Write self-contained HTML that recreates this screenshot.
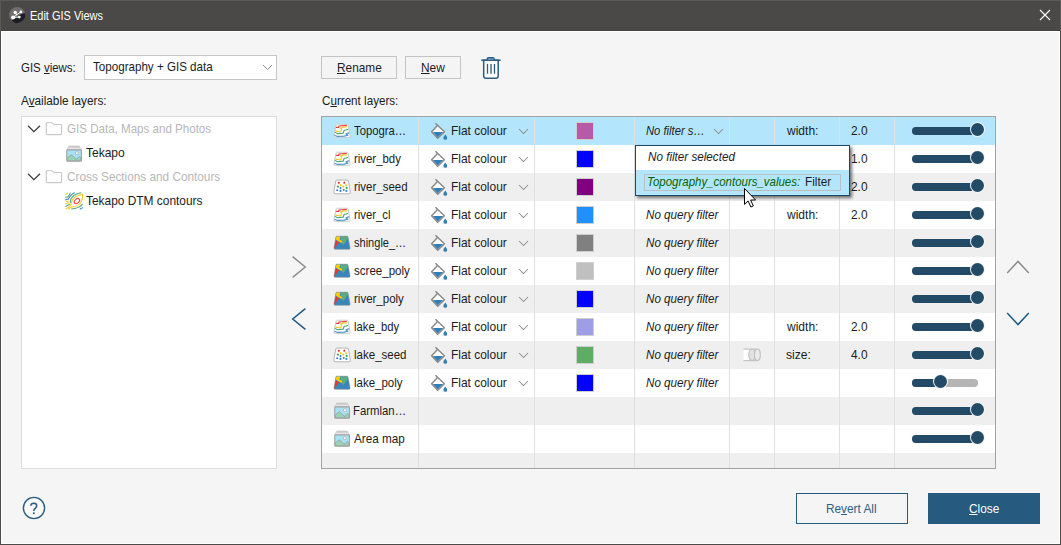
<!DOCTYPE html>
<html lang="en">
<head>
<meta charset="utf-8">
<title>Edit GIS Views</title>
<style>
html,body{margin:0;padding:0;background:#f5f5f5;}
body{width:1061px;height:545px;overflow:hidden;position:relative;font-family:"Liberation Sans",sans-serif;font-size:13px;color:#1c1c1c;}
#win{position:absolute;left:0;top:0;width:1059px;height:513px;border:1px solid #4d4b49;border-top:31px solid #4b4947;background:#f5f5f5;box-sizing:content-box;box-shadow:inset 0 0 0 1px #fff;}
#titlebar{position:absolute;left:0;top:0;width:1061px;height:31px;background:#4b4947;box-shadow:inset 0 1px 0 #5b5957, inset -1px 0 0 #5b5957, inset 1px 0 0 #5b5957, inset 0 -1px 0 #454341;}
.ic{position:absolute;overflow:visible;}
.t{position:absolute;white-space:nowrap;line-height:15px;transform-origin:0 50%;}
.t u{text-decoration:underline;text-underline-offset:1px;text-decoration-thickness:1px;}
#combo{position:absolute;left:84px;top:55px;width:191px;height:23px;border:1px solid #c6c6c6;background:#fff;}
#tree{position:absolute;left:21px;top:116px;width:254px;height:351px;border:1px solid #dcdcdc;background:#fff;}
.btn{position:absolute;border:1px solid #c4c4c4;background:#f4f4f4;}
#table{position:absolute;left:321px;top:116px;width:673px;height:351px;border:1px solid #a3a3a3;background:#fff;overflow:hidden;}
.row{position:absolute;left:0;width:673px;background:#fff;}
.row.alt{background:#efefef;}
.row.sel{background:#b3e5fc;}
.vsep{position:absolute;top:0;width:1px;height:351px;background:#e0e0e0;}
.sw{position:absolute;width:16px;height:16px;border:1px solid #cecece;}
.trk{position:absolute;height:7.4px;border-radius:3.7px;background:#234b67;}
.knob{position:absolute;width:13.4px;height:13.4px;border-radius:50%;background:#234b67;border:1px solid rgba(255,255,255,.95);}
#popup{position:absolute;left:635px;top:145px;width:213px;height:49px;border:1px solid #1d4866;background:#fff;box-shadow:2px 2px 3px rgba(0,0,0,.55);}
#pophl{position:absolute;left:0;top:24px;width:213px;height:25px;background:#b3e5fc;}
#popfocus{position:absolute;left:8px;top:28px;width:195px;height:15px;border:1px solid #b9c0c4;}
#revert{position:absolute;left:796px;top:493px;width:110px;height:29px;border:1px solid #265a7f;}
#close{position:absolute;left:928px;top:493px;width:112px;height:31px;background:#265a7f;}
</style>
</head>
<body>
<div id="win"></div>
<div id="titlebar">
<svg class="ic" style="left:8px;top:6px" width="18" height="18" viewBox="0 0 18 18">
<circle cx="9.2" cy="9" r="8" fill="#6f6f6f"/>
<path d="M3.4 14.5 C6.5 13.5 8.3 11.8 10 10.1 C12 8.3 14.5 7.6 17 7.2 A8 8 0 0 1 3.4 14.5Z" fill="#1d1e23"/>
<path d="M7.2 6.5 L9 9 M5.1 11.4 L11.3 11.1 M5.1 11.4 L12.9 5.9" stroke="#fff" stroke-width=".9" fill="none"/>
<circle cx="7.2" cy="6.5" r="1.7" fill="#fff"/><circle cx="12.9" cy="5.9" r="1.3" fill="#fff"/>
<circle cx="5.1" cy="11.4" r="1.95" fill="#fff"/><circle cx="11.3" cy="11.1" r="1.4" fill="#fff"/>
</svg>
<span class="t" style="left:30.0px;top:9px;font-size:12px;color:#fff;transform:scaleX(0.9147);">Edit GIS Views</span>
<svg class="ic" style="left:1038px;top:8px" width="14" height="14" viewBox="0 0 14 14"><path d="M2 2 L12 12 M12 2 L2 12" stroke="#fff" stroke-width="1.1"/></svg>
</div>
<span class="t" style="left:21.2px;top:60px;transform:scaleX(0.8811);">GIS <u>v</u>iews:</span>
<div id="combo">
</div>
<span class="t" style="left:93.4px;top:59px;transform:scaleX(0.8930);">Topography + GIS data</span>
<svg class="ic" style="left:261.8px;top:64.0px" width="11" height="6.6" viewBox="-1 -1 11 6.6"><path d="M0 0 L4.5 4.6 L9 0" fill="none" stroke="#8f8f8f" stroke-width="1.0"/></svg>
<span class="t" style="left:21.2px;top:93px;transform:scaleX(0.9061);">A<u>v</u>ailable layers:</span>
<div id="tree"></div>
<svg class="ic" style="left:26px;top:124px" width="16" height="10" viewBox="0 0 16 10"><path d="M2 1.8 L7.9 7.7 L14 1.8" fill="none" stroke="#3a3a3a" stroke-width="1.25"/></svg>
<svg class="ic" style="left:45px;top:121px" width="18" height="15" viewBox="0 0 18 15"><path d="M2.3 1.5 H6.4 Q6.9 1.5 7.2 1.9 L8.3 3.2 Q8.6 3.5 9.1 3.5 H15.6 Q16.6 3.5 16.6 4.5 V12.6 Q16.6 13.6 15.6 13.6 H2.3 Q1.3 13.6 1.3 12.6 V2.5 Q1.3 1.5 2.3 1.5Z" fill="#fff" stroke="#c9c9c9" stroke-width="1.15"/></svg>
<span class="t" style="left:66.5px;top:121px;color:#b7b7b7;transform:scaleX(0.8900);">GIS Data, Maps and Photos</span>
<svg class="ic" style="left:65px;top:144.5px" width="18" height="18" viewBox="0 0 18 18">
<path d="M3.3 2.3 L3.8 1 H14.4 L14.9 2.3Z" fill="#cfcfcf" stroke="#c4c4c4" stroke-width=".7"/>
<path d="M2.2 4.4 L2.7 2.7 H15.6 L16.1 4.4Z" fill="#efefef" stroke="#c8c8c8" stroke-width=".7"/>
<rect x="1.75" y="4.85" width="14.7" height="11.4" rx=".7" fill="#a6e1f5" stroke="#a3a3a3" stroke-width="1.1"/>
<path d="M2.3 12.8 L6.5 9.8 L12.6 15.7 H2.3Z" fill="#97d3b5" stroke="#a3a3a3" stroke-width=".9" stroke-linejoin="round"/>
<path d="M11.3 14.2 L14.5 11.5 L15.9 12.8 V15.7 H12.9Z" fill="#97d3b5" stroke="#a3a3a3" stroke-width=".9" stroke-linejoin="round"/>
<circle cx="11.9" cy="8.1" r="1.5" fill="#fff" stroke="#b0b0b0" stroke-width=".8"/>
</svg>
<span class="t" style="left:86.1px;top:145px;transform:scaleX(0.9235);">Tekapo</span>
<svg class="ic" style="left:26px;top:172px" width="16" height="10" viewBox="0 0 16 10"><path d="M2 1.8 L7.9 7.7 L14 1.8" fill="none" stroke="#3a3a3a" stroke-width="1.25"/></svg>
<svg class="ic" style="left:45px;top:169px" width="18" height="15" viewBox="0 0 18 15"><path d="M2.3 1.5 H6.4 Q6.9 1.5 7.2 1.9 L8.3 3.2 Q8.6 3.5 9.1 3.5 H15.6 Q16.6 3.5 16.6 4.5 V12.6 Q16.6 13.6 15.6 13.6 H2.3 Q1.3 13.6 1.3 12.6 V2.5 Q1.3 1.5 2.3 1.5Z" fill="#fff" stroke="#c9c9c9" stroke-width="1.15"/></svg>
<span class="t" style="left:66.5px;top:169px;color:#b7b7b7;transform:scaleX(0.9063);">Cross Sections and Contours</span>
<svg class="ic" style="left:65px;top:192px" width="19" height="19" viewBox="0 0 19 19">
<g fill="none" stroke-width="1.1" stroke-linecap="round">
<ellipse cx="11.9" cy="9.1" rx="3.1" ry="2" transform="rotate(-42 11.9 9.1)" stroke="#e94b4f"/>
<path d="M1.2 16.7 L4.6 14.6 Q5.6 13.6 6.3 10.6 Q7 7.3 10.6 4.8 Q13.8 2.9 17.6 2.2" stroke="#f9ca2a"/>
<path d="M17.6 2.2 Q17.9 6.5 16 10.3 Q13.9 13.8 10.4 14.5 Q7.6 14.8 6 15.3 L3.6 17" stroke="#f9ca2a"/>
<path d="M5.2 10.4 Q5.2 6.5 8.9 3.5 Q11.9 1.3 16 .8" stroke="#58a77d"/>
<path d="M6.7 17 Q9 16.3 11.7 16 Q15 15.2 17.4 12.4" stroke="#58a77d"/>
<path d="M.8 5.3 L2.8 4.9 Q4.2 3.2 5.3 1.2" stroke="#58a77d"/>
<path d="M.9 7.4 L3.2 7.3 Q4 6 5 4.4 Q6.8 2.2 9.3 .8" stroke="#4088c7"/>
<path d="M1 2.3 L2.5 .9" stroke="#f9ca2a"/>
<path d="M.8 8.7 L3.3 10.2 M.8 11.6 L3 11.3" stroke="#f9ca2a"/>
<path d="M.8 14.4 L4.4 12.3" stroke="#58a77d"/>
<path d="M15.2 16.9 L17.4 15.8" stroke="#4088c7"/>
</g>
</svg>
<span class="t" style="left:86.1px;top:193px;transform:scaleX(0.9165);">Tekapo DTM contours</span>
<div class="btn" style="left:321px;top:56px;width:74px;height:21px"></div>
<span class="t" style="left:336.69px;top:60px;transform:scaleX(0.9101);"><u>R</u>ename</span>
<div class="btn" style="left:405px;top:56px;width:54px;height:21px"></div>
<span class="t" style="left:420.58px;top:60px;transform:scaleX(0.9173);"><u>N</u>ew</span>
<svg class="ic" style="left:480px;top:55px" width="22" height="25" viewBox="0 0 22 25">
<path d="M3.7 5.2 H18.2 V21 Q18.2 23.3 15.9 23.3 H6 Q3.7 23.3 3.7 21Z" fill="#fff" stroke="#2a5d82" stroke-width="1.5"/>
<path d="M1.2 5.2 H20.7" stroke="#2a5d82" stroke-width="1.5"/>
<path d="M7.3 5 V3.8 Q7.3 2.6 8.5 2.6 H12.9 Q14.1 2.6 14.1 3.8 V5" fill="#6d93ad" stroke="#2a5d82" stroke-width="1.3"/>
<path d="M7.5 8.9 V18.8 M14.5 8.9 V18.8" stroke="#2a5d82" stroke-width="1.3"/>
<path d="M11 8.9 V18.8" stroke="#6d93ad" stroke-width="2"/>
</svg>
<span class="t" style="left:321.6px;top:93px;transform:scaleX(0.8956);">C<u>u</u>rrent layers:</span>
<svg class="ic" style="left:290px;top:254px" width="18" height="26" viewBox="0 0 18 26"><path d="M2.6 2.6 L15.3 13 L2.6 23.4" fill="none" stroke="#8b8b8b" stroke-width="1.4"/></svg>
<svg class="ic" style="left:290px;top:306px" width="18" height="26" viewBox="0 0 18 26"><path d="M15.4 2.6 L2.7 13 L15.4 23.4" fill="none" stroke="#1f5a85" stroke-width="1.5"/></svg>
<svg class="ic" style="left:1005px;top:259px" width="26" height="16" viewBox="0 0 26 16"><path d="M2.2 14 L13 2.4 L23.8 14" fill="none" stroke="#8b8b8b" stroke-width="1.4"/></svg>
<svg class="ic" style="left:1005px;top:311px" width="26" height="16" viewBox="0 0 26 16"><path d="M2.2 2 L13 13.6 L23.8 2" fill="none" stroke="#1f5a85" stroke-width="1.5"/></svg>
<div id="table">
<div class="row alt sel" style="top:0px;height:28px"></div>
<div class="row" style="top:28px;height:28px"></div>
<div class="row alt" style="top:56px;height:28px"></div>
<div class="row" style="top:84px;height:28px"></div>
<div class="row alt" style="top:112px;height:28px"></div>
<div class="row" style="top:140px;height:28px"></div>
<div class="row alt" style="top:168px;height:28px"></div>
<div class="row" style="top:196px;height:28px"></div>
<div class="row alt" style="top:224px;height:28px"></div>
<div class="row" style="top:252px;height:28px"></div>
<div class="row alt" style="top:280px;height:28px"></div>
<div class="row" style="top:308px;height:28px"></div>
<div class="row alt" style="top:336px;height:15px"></div>
<div class="vsep" style="left:96px"></div>
<div class="vsep" style="left:212px"></div>
<div class="vsep" style="left:312px"></div>
<div class="vsep" style="left:407px"></div>
<div class="vsep" style="left:452px"></div>
<div class="vsep" style="left:517px"></div>
<div class="vsep" style="left:572px"></div>
</div>
<svg class="ic" style="left:333px;top:123px" width="19" height="16" viewBox="0 0 19 16">
<path d="M4 1.2 H14.2 Q15 1.2 15.2 2 L17.1 13.1 Q17.3 14.6 15.9 14.6 H2.2 Q.8 14.6 1 13.1 L3 2 Q3.2 1.2 4 1.2Z" fill="#fff" stroke="#cdcdcd" stroke-width="1"/>
<path d="M3.4 4.4 H5.8 V3 L13.4 2.4" fill="none" stroke="#e8403c" stroke-width="1.1" stroke-linecap="round" stroke-linejoin="round"/>
<path d="M2.6 7.6 L4 8.5 L8 8.2 L8.7 5.8 L7.5 5.1 L9.4 4.4 L14 3.7" fill="none" stroke="#f7c61c" stroke-width="1.1" stroke-linecap="round" stroke-linejoin="round"/>
<path d="M2.4 9.4 L4.2 10.6 L10.3 10.1 L11 7.5 L14.8 6.5" fill="none" stroke="#4fa374" stroke-width="1.1" stroke-linecap="round" stroke-linejoin="round"/>
<path d="M1.9 12.4 L4.6 13.4 L11.2 13.1 L14.9 12.3 L12.9 10.8 L15.8 9.9" fill="none" stroke="#4a93cc" stroke-width="1.1" stroke-linecap="round" stroke-linejoin="round"/>
</svg>
<span class="t" style="left:354.0px;top:123px;transform:scaleX(0.8698);">Topogra…</span>
<svg class="ic" style="left:430px;top:121px" width="18" height="19" viewBox="0 0 18 19">
<path d="M7.4 4.4 L1.7 10.7 L7.7 17 L14.3 10.7 Z" fill="#fff"/>
<path d="M2.8 11 H13.2 L7.7 16.4Z" fill="#2f7fba"/>
<path d="M5.4 2.2 L14.4 10.7 L7.7 17.3 L1.6 10.7 L7.5 4.4" fill="none" stroke="#8a8a8a" stroke-width="1.5" stroke-linejoin="round"/>
<path d="M15.3 13.5 Q17.2 15.9 17.2 16.9 A1.9 1.9 0 0 1 13.4 16.9 Q13.4 15.9 15.3 13.5Z" fill="#2f7fba"/>
</svg>
<span class="t" style="left:450.58px;top:123px;transform:scaleX(0.9195);">Flat colour</span>
<svg class="ic" style="left:517.8px;top:128.4px" width="11" height="6.5" viewBox="-1 -1 11 6.5"><path d="M0 0 L4.5 4.5 L9 0" fill="none" stroke="#8e8e8e" stroke-width="1.05"/></svg>
<div class="sw" style="left:576px;top:122px;background:#b55ba8"></div>
<span class="t" style="left:646.1px;top:123px;font-style:italic;transform:scaleX(0.8649);">No filter s…</span>
<svg class="ic" style="left:713.2px;top:128.4px" width="11" height="6.5" viewBox="-1 -1 11 6.5"><path d="M0 0 L4.5 4.5 L9 0" fill="none" stroke="#8e8e8e" stroke-width="1.05"/></svg>
<span class="t" style="left:786.73px;top:123px;transform:scaleX(0.9258);">width:</span>
<span class="t" style="left:851.0px;top:123px;transform:scaleX(0.9136);">2.0</span>
<div class="trk" style="left:911.5px;top:127.3px;width:66.5px"></div>
<div class="knob" style="left:970px;top:122px"></div>
<svg class="ic" style="left:333px;top:151px" width="19" height="16" viewBox="0 0 19 16">
<path d="M4 1.2 H14.2 Q15 1.2 15.2 2 L17.1 13.1 Q17.3 14.6 15.9 14.6 H2.2 Q.8 14.6 1 13.1 L3 2 Q3.2 1.2 4 1.2Z" fill="#fff" stroke="#cdcdcd" stroke-width="1"/>
<path d="M3.4 4.4 H5.8 V3 L13.4 2.4" fill="none" stroke="#e8403c" stroke-width="1.1" stroke-linecap="round" stroke-linejoin="round"/>
<path d="M2.6 7.6 L4 8.5 L8 8.2 L8.7 5.8 L7.5 5.1 L9.4 4.4 L14 3.7" fill="none" stroke="#f7c61c" stroke-width="1.1" stroke-linecap="round" stroke-linejoin="round"/>
<path d="M2.4 9.4 L4.2 10.6 L10.3 10.1 L11 7.5 L14.8 6.5" fill="none" stroke="#4fa374" stroke-width="1.1" stroke-linecap="round" stroke-linejoin="round"/>
<path d="M1.9 12.4 L4.6 13.4 L11.2 13.1 L14.9 12.3 L12.9 10.8 L15.8 9.9" fill="none" stroke="#4a93cc" stroke-width="1.1" stroke-linecap="round" stroke-linejoin="round"/>
</svg>
<span class="t" style="left:354.0px;top:151px;transform:scaleX(0.8765);">river_bdy</span>
<svg class="ic" style="left:430px;top:149px" width="18" height="19" viewBox="0 0 18 19">
<path d="M7.4 4.4 L1.7 10.7 L7.7 17 L14.3 10.7 Z" fill="#fff"/>
<path d="M2.8 11 H13.2 L7.7 16.4Z" fill="#2f7fba"/>
<path d="M5.4 2.2 L14.4 10.7 L7.7 17.3 L1.6 10.7 L7.5 4.4" fill="none" stroke="#8a8a8a" stroke-width="1.5" stroke-linejoin="round"/>
<path d="M15.3 13.5 Q17.2 15.9 17.2 16.9 A1.9 1.9 0 0 1 13.4 16.9 Q13.4 15.9 15.3 13.5Z" fill="#2f7fba"/>
</svg>
<span class="t" style="left:450.58px;top:151px;transform:scaleX(0.9195);">Flat colour</span>
<svg class="ic" style="left:517.8px;top:156.4px" width="11" height="6.5" viewBox="-1 -1 11 6.5"><path d="M0 0 L4.5 4.5 L9 0" fill="none" stroke="#8e8e8e" stroke-width="1.05"/></svg>
<div class="sw" style="left:576px;top:150px;background:#0000ff"></div>
<span class="t" style="left:851.0px;top:151px;transform:scaleX(0.9136);">1.0</span>
<div class="trk" style="left:911.5px;top:155.3px;width:66.5px"></div>
<div class="knob" style="left:970px;top:150px"></div>
<svg class="ic" style="left:333px;top:179px" width="19" height="16" viewBox="0 0 19 16">
<path d="M4 1 H14.3 Q15.2 1 15.4 1.9 L17.3 13 Q17.5 14.8 15.9 14.8 H2.2 Q.6 14.8 .8 13 L2.8 1.9 Q3 1 4 1Z" fill="#fff" stroke="#b4b4b4" stroke-width="1"/>
<circle cx="5.9" cy="3.8" r="1.05" fill="#e0301e"/><circle cx="11.3" cy="3.8" r="1.05" fill="#e0301e"/><circle cx="7.6" cy="6.1" r="1.05" fill="#fbc010"/><circle cx="13" cy="6.3" r="1.05" fill="#fbc010"/><circle cx="10.2" cy="7.6" r="1.05" fill="#fbc010"/><circle cx="4.9" cy="7.6" r="1.05" fill="#3f9b6a"/><circle cx="13.7" cy="8.9" r="1.05" fill="#3f9b6a"/><circle cx="10.7" cy="11" r="1.05" fill="#3f9b6a"/><circle cx="7.5" cy="9.1" r="1.05" fill="#3a7fd0"/><circle cx="4.2" cy="11.3" r="1.05" fill="#3a7fd0"/><circle cx="7.5" cy="11.9" r="1.05" fill="#3a7fd0"/><circle cx="13.4" cy="11.9" r="1.05" fill="#3a7fd0"/></svg>
<span class="t" style="left:354.0px;top:179px;transform:scaleX(0.8815);">river_seed</span>
<svg class="ic" style="left:430px;top:177px" width="18" height="19" viewBox="0 0 18 19">
<path d="M7.4 4.4 L1.7 10.7 L7.7 17 L14.3 10.7 Z" fill="#fff"/>
<path d="M2.8 11 H13.2 L7.7 16.4Z" fill="#2f7fba"/>
<path d="M5.4 2.2 L14.4 10.7 L7.7 17.3 L1.6 10.7 L7.5 4.4" fill="none" stroke="#8a8a8a" stroke-width="1.5" stroke-linejoin="round"/>
<path d="M15.3 13.5 Q17.2 15.9 17.2 16.9 A1.9 1.9 0 0 1 13.4 16.9 Q13.4 15.9 15.3 13.5Z" fill="#2f7fba"/>
</svg>
<span class="t" style="left:450.58px;top:179px;transform:scaleX(0.9195);">Flat colour</span>
<svg class="ic" style="left:517.8px;top:184.4px" width="11" height="6.5" viewBox="-1 -1 11 6.5"><path d="M0 0 L4.5 4.5 L9 0" fill="none" stroke="#8e8e8e" stroke-width="1.05"/></svg>
<div class="sw" style="left:576px;top:178px;background:#800080"></div>
<span class="t" style="left:851.0px;top:179px;transform:scaleX(0.9136);">2.0</span>
<div class="trk" style="left:911.5px;top:183.3px;width:66.5px"></div>
<div class="knob" style="left:970px;top:178px"></div>
<svg class="ic" style="left:333px;top:207px" width="19" height="16" viewBox="0 0 19 16">
<path d="M4 1.2 H14.2 Q15 1.2 15.2 2 L17.1 13.1 Q17.3 14.6 15.9 14.6 H2.2 Q.8 14.6 1 13.1 L3 2 Q3.2 1.2 4 1.2Z" fill="#fff" stroke="#cdcdcd" stroke-width="1"/>
<path d="M3.4 4.4 H5.8 V3 L13.4 2.4" fill="none" stroke="#e8403c" stroke-width="1.1" stroke-linecap="round" stroke-linejoin="round"/>
<path d="M2.6 7.6 L4 8.5 L8 8.2 L8.7 5.8 L7.5 5.1 L9.4 4.4 L14 3.7" fill="none" stroke="#f7c61c" stroke-width="1.1" stroke-linecap="round" stroke-linejoin="round"/>
<path d="M2.4 9.4 L4.2 10.6 L10.3 10.1 L11 7.5 L14.8 6.5" fill="none" stroke="#4fa374" stroke-width="1.1" stroke-linecap="round" stroke-linejoin="round"/>
<path d="M1.9 12.4 L4.6 13.4 L11.2 13.1 L14.9 12.3 L12.9 10.8 L15.8 9.9" fill="none" stroke="#4a93cc" stroke-width="1.1" stroke-linecap="round" stroke-linejoin="round"/>
</svg>
<span class="t" style="left:354.0px;top:207px;transform:scaleX(0.8713);">river_cl</span>
<svg class="ic" style="left:430px;top:205px" width="18" height="19" viewBox="0 0 18 19">
<path d="M7.4 4.4 L1.7 10.7 L7.7 17 L14.3 10.7 Z" fill="#fff"/>
<path d="M2.8 11 H13.2 L7.7 16.4Z" fill="#2f7fba"/>
<path d="M5.4 2.2 L14.4 10.7 L7.7 17.3 L1.6 10.7 L7.5 4.4" fill="none" stroke="#8a8a8a" stroke-width="1.5" stroke-linejoin="round"/>
<path d="M15.3 13.5 Q17.2 15.9 17.2 16.9 A1.9 1.9 0 0 1 13.4 16.9 Q13.4 15.9 15.3 13.5Z" fill="#2f7fba"/>
</svg>
<span class="t" style="left:450.58px;top:207px;transform:scaleX(0.9195);">Flat colour</span>
<svg class="ic" style="left:517.8px;top:212.4px" width="11" height="6.5" viewBox="-1 -1 11 6.5"><path d="M0 0 L4.5 4.5 L9 0" fill="none" stroke="#8e8e8e" stroke-width="1.05"/></svg>
<div class="sw" style="left:576px;top:206px;background:#1e90ff"></div>
<span class="t" style="left:646.1px;top:207px;font-style:italic;transform:scaleX(0.8947);">No query filter</span>
<span class="t" style="left:786.73px;top:207px;transform:scaleX(0.9258);">width:</span>
<span class="t" style="left:851.0px;top:207px;transform:scaleX(0.9136);">2.0</span>
<div class="trk" style="left:911.5px;top:211.3px;width:66.5px"></div>
<div class="knob" style="left:970px;top:206px"></div>
<svg class="ic" style="left:333px;top:235px" width="19" height="16" viewBox="0 0 19 16">
<path d="M3.6 1.2 H14.2 Q14.9 1.2 15 2 L17.1 13 Q17.3 14.3 16 14.3 H2.2 Q.8 14.3 1 13 L2.9 2 Q3 1.2 3.6 1.2Z" fill="#3a85b9" stroke="#8d9399" stroke-width=".6"/>
<path d="M7.6 1.6 H14.2 Q14.6 1.6 14.7 2.2 L14.9 3.5 L10.5 9.9 L9.1 8.6 L7.4 4.1Z" fill="#5dab84"/>
<path d="M3.7 1.6 H7.3 L6.4 4.3 L9.1 6.2 L8.8 7.9 L5.3 6.2 L2.9 4.6 L3.25 2.2 Q3.35 1.6 3.7 1.6Z" fill="#ffcf00"/>
<path d="M2.9 5.6 L6.2 7.2 L1.5 13.5 Q1.2 13.3 1.3 12.8Z" fill="#e53a36"/>
</svg>
<span class="t" style="left:354.0px;top:235px;transform:scaleX(0.8490);">shingle_…</span>
<svg class="ic" style="left:430px;top:233px" width="18" height="19" viewBox="0 0 18 19">
<path d="M7.4 4.4 L1.7 10.7 L7.7 17 L14.3 10.7 Z" fill="#fff"/>
<path d="M2.8 11 H13.2 L7.7 16.4Z" fill="#2f7fba"/>
<path d="M5.4 2.2 L14.4 10.7 L7.7 17.3 L1.6 10.7 L7.5 4.4" fill="none" stroke="#8a8a8a" stroke-width="1.5" stroke-linejoin="round"/>
<path d="M15.3 13.5 Q17.2 15.9 17.2 16.9 A1.9 1.9 0 0 1 13.4 16.9 Q13.4 15.9 15.3 13.5Z" fill="#2f7fba"/>
</svg>
<span class="t" style="left:450.58px;top:235px;transform:scaleX(0.9195);">Flat colour</span>
<svg class="ic" style="left:517.8px;top:240.4px" width="11" height="6.5" viewBox="-1 -1 11 6.5"><path d="M0 0 L4.5 4.5 L9 0" fill="none" stroke="#8e8e8e" stroke-width="1.05"/></svg>
<div class="sw" style="left:576px;top:234px;background:#808080"></div>
<span class="t" style="left:646.1px;top:235px;font-style:italic;transform:scaleX(0.8947);">No query filter</span>
<div class="trk" style="left:911.5px;top:239.3px;width:66.5px"></div>
<div class="knob" style="left:970px;top:234px"></div>
<svg class="ic" style="left:333px;top:263px" width="19" height="16" viewBox="0 0 19 16">
<path d="M3.6 1.2 H14.2 Q14.9 1.2 15 2 L17.1 13 Q17.3 14.3 16 14.3 H2.2 Q.8 14.3 1 13 L2.9 2 Q3 1.2 3.6 1.2Z" fill="#3a85b9" stroke="#8d9399" stroke-width=".6"/>
<path d="M7.6 1.6 H14.2 Q14.6 1.6 14.7 2.2 L14.9 3.5 L10.5 9.9 L9.1 8.6 L7.4 4.1Z" fill="#5dab84"/>
<path d="M3.7 1.6 H7.3 L6.4 4.3 L9.1 6.2 L8.8 7.9 L5.3 6.2 L2.9 4.6 L3.25 2.2 Q3.35 1.6 3.7 1.6Z" fill="#ffcf00"/>
<path d="M2.9 5.6 L6.2 7.2 L1.5 13.5 Q1.2 13.3 1.3 12.8Z" fill="#e53a36"/>
</svg>
<span class="t" style="left:354.0px;top:263px;transform:scaleX(0.8885);">scree_poly</span>
<svg class="ic" style="left:430px;top:261px" width="18" height="19" viewBox="0 0 18 19">
<path d="M7.4 4.4 L1.7 10.7 L7.7 17 L14.3 10.7 Z" fill="#fff"/>
<path d="M2.8 11 H13.2 L7.7 16.4Z" fill="#2f7fba"/>
<path d="M5.4 2.2 L14.4 10.7 L7.7 17.3 L1.6 10.7 L7.5 4.4" fill="none" stroke="#8a8a8a" stroke-width="1.5" stroke-linejoin="round"/>
<path d="M15.3 13.5 Q17.2 15.9 17.2 16.9 A1.9 1.9 0 0 1 13.4 16.9 Q13.4 15.9 15.3 13.5Z" fill="#2f7fba"/>
</svg>
<span class="t" style="left:450.58px;top:263px;transform:scaleX(0.9195);">Flat colour</span>
<svg class="ic" style="left:517.8px;top:268.4px" width="11" height="6.5" viewBox="-1 -1 11 6.5"><path d="M0 0 L4.5 4.5 L9 0" fill="none" stroke="#8e8e8e" stroke-width="1.05"/></svg>
<div class="sw" style="left:576px;top:262px;background:#c0c0c0"></div>
<span class="t" style="left:646.1px;top:263px;font-style:italic;transform:scaleX(0.8947);">No query filter</span>
<div class="trk" style="left:911.5px;top:267.3px;width:66.5px"></div>
<div class="knob" style="left:970px;top:262px"></div>
<svg class="ic" style="left:333px;top:291px" width="19" height="16" viewBox="0 0 19 16">
<path d="M3.6 1.2 H14.2 Q14.9 1.2 15 2 L17.1 13 Q17.3 14.3 16 14.3 H2.2 Q.8 14.3 1 13 L2.9 2 Q3 1.2 3.6 1.2Z" fill="#3a85b9" stroke="#8d9399" stroke-width=".6"/>
<path d="M7.6 1.6 H14.2 Q14.6 1.6 14.7 2.2 L14.9 3.5 L10.5 9.9 L9.1 8.6 L7.4 4.1Z" fill="#5dab84"/>
<path d="M3.7 1.6 H7.3 L6.4 4.3 L9.1 6.2 L8.8 7.9 L5.3 6.2 L2.9 4.6 L3.25 2.2 Q3.35 1.6 3.7 1.6Z" fill="#ffcf00"/>
<path d="M2.9 5.6 L6.2 7.2 L1.5 13.5 Q1.2 13.3 1.3 12.8Z" fill="#e53a36"/>
</svg>
<span class="t" style="left:354.0px;top:291px;transform:scaleX(0.8847);">river_poly</span>
<svg class="ic" style="left:430px;top:289px" width="18" height="19" viewBox="0 0 18 19">
<path d="M7.4 4.4 L1.7 10.7 L7.7 17 L14.3 10.7 Z" fill="#fff"/>
<path d="M2.8 11 H13.2 L7.7 16.4Z" fill="#2f7fba"/>
<path d="M5.4 2.2 L14.4 10.7 L7.7 17.3 L1.6 10.7 L7.5 4.4" fill="none" stroke="#8a8a8a" stroke-width="1.5" stroke-linejoin="round"/>
<path d="M15.3 13.5 Q17.2 15.9 17.2 16.9 A1.9 1.9 0 0 1 13.4 16.9 Q13.4 15.9 15.3 13.5Z" fill="#2f7fba"/>
</svg>
<span class="t" style="left:450.58px;top:291px;transform:scaleX(0.9195);">Flat colour</span>
<svg class="ic" style="left:517.8px;top:296.4px" width="11" height="6.5" viewBox="-1 -1 11 6.5"><path d="M0 0 L4.5 4.5 L9 0" fill="none" stroke="#8e8e8e" stroke-width="1.05"/></svg>
<div class="sw" style="left:576px;top:290px;background:#0000ff"></div>
<span class="t" style="left:646.1px;top:291px;font-style:italic;transform:scaleX(0.8947);">No query filter</span>
<div class="trk" style="left:911.5px;top:295.3px;width:66.5px"></div>
<div class="knob" style="left:970px;top:290px"></div>
<svg class="ic" style="left:333px;top:319px" width="19" height="16" viewBox="0 0 19 16">
<path d="M4 1.2 H14.2 Q15 1.2 15.2 2 L17.1 13.1 Q17.3 14.6 15.9 14.6 H2.2 Q.8 14.6 1 13.1 L3 2 Q3.2 1.2 4 1.2Z" fill="#fff" stroke="#cdcdcd" stroke-width="1"/>
<path d="M3.4 4.4 H5.8 V3 L13.4 2.4" fill="none" stroke="#e8403c" stroke-width="1.1" stroke-linecap="round" stroke-linejoin="round"/>
<path d="M2.6 7.6 L4 8.5 L8 8.2 L8.7 5.8 L7.5 5.1 L9.4 4.4 L14 3.7" fill="none" stroke="#f7c61c" stroke-width="1.1" stroke-linecap="round" stroke-linejoin="round"/>
<path d="M2.4 9.4 L4.2 10.6 L10.3 10.1 L11 7.5 L14.8 6.5" fill="none" stroke="#4fa374" stroke-width="1.1" stroke-linecap="round" stroke-linejoin="round"/>
<path d="M1.9 12.4 L4.6 13.4 L11.2 13.1 L14.9 12.3 L12.9 10.8 L15.8 9.9" fill="none" stroke="#4a93cc" stroke-width="1.1" stroke-linecap="round" stroke-linejoin="round"/>
</svg>
<span class="t" style="left:354.0px;top:319px;transform:scaleX(0.8679);">lake_bdy</span>
<svg class="ic" style="left:430px;top:317px" width="18" height="19" viewBox="0 0 18 19">
<path d="M7.4 4.4 L1.7 10.7 L7.7 17 L14.3 10.7 Z" fill="#fff"/>
<path d="M2.8 11 H13.2 L7.7 16.4Z" fill="#2f7fba"/>
<path d="M5.4 2.2 L14.4 10.7 L7.7 17.3 L1.6 10.7 L7.5 4.4" fill="none" stroke="#8a8a8a" stroke-width="1.5" stroke-linejoin="round"/>
<path d="M15.3 13.5 Q17.2 15.9 17.2 16.9 A1.9 1.9 0 0 1 13.4 16.9 Q13.4 15.9 15.3 13.5Z" fill="#2f7fba"/>
</svg>
<span class="t" style="left:450.58px;top:319px;transform:scaleX(0.9195);">Flat colour</span>
<svg class="ic" style="left:517.8px;top:324.4px" width="11" height="6.5" viewBox="-1 -1 11 6.5"><path d="M0 0 L4.5 4.5 L9 0" fill="none" stroke="#8e8e8e" stroke-width="1.05"/></svg>
<div class="sw" style="left:576px;top:318px;background:#9e9ee6"></div>
<span class="t" style="left:646.1px;top:319px;font-style:italic;transform:scaleX(0.8947);">No query filter</span>
<span class="t" style="left:786.73px;top:319px;transform:scaleX(0.9258);">width:</span>
<span class="t" style="left:851.0px;top:319px;transform:scaleX(0.9136);">2.0</span>
<div class="trk" style="left:911.5px;top:323.3px;width:66.5px"></div>
<div class="knob" style="left:970px;top:318px"></div>
<svg class="ic" style="left:333px;top:347px" width="19" height="16" viewBox="0 0 19 16">
<path d="M4 1 H14.3 Q15.2 1 15.4 1.9 L17.3 13 Q17.5 14.8 15.9 14.8 H2.2 Q.6 14.8 .8 13 L2.8 1.9 Q3 1 4 1Z" fill="#fff" stroke="#b4b4b4" stroke-width="1"/>
<circle cx="5.9" cy="3.8" r="1.05" fill="#e0301e"/><circle cx="11.3" cy="3.8" r="1.05" fill="#e0301e"/><circle cx="7.6" cy="6.1" r="1.05" fill="#fbc010"/><circle cx="13" cy="6.3" r="1.05" fill="#fbc010"/><circle cx="10.2" cy="7.6" r="1.05" fill="#fbc010"/><circle cx="4.9" cy="7.6" r="1.05" fill="#3f9b6a"/><circle cx="13.7" cy="8.9" r="1.05" fill="#3f9b6a"/><circle cx="10.7" cy="11" r="1.05" fill="#3f9b6a"/><circle cx="7.5" cy="9.1" r="1.05" fill="#3a7fd0"/><circle cx="4.2" cy="11.3" r="1.05" fill="#3a7fd0"/><circle cx="7.5" cy="11.9" r="1.05" fill="#3a7fd0"/><circle cx="13.4" cy="11.9" r="1.05" fill="#3a7fd0"/></svg>
<span class="t" style="left:354.0px;top:347px;transform:scaleX(0.8859);">lake_seed</span>
<svg class="ic" style="left:430px;top:345px" width="18" height="19" viewBox="0 0 18 19">
<path d="M7.4 4.4 L1.7 10.7 L7.7 17 L14.3 10.7 Z" fill="#fff"/>
<path d="M2.8 11 H13.2 L7.7 16.4Z" fill="#2f7fba"/>
<path d="M5.4 2.2 L14.4 10.7 L7.7 17.3 L1.6 10.7 L7.5 4.4" fill="none" stroke="#8a8a8a" stroke-width="1.5" stroke-linejoin="round"/>
<path d="M15.3 13.5 Q17.2 15.9 17.2 16.9 A1.9 1.9 0 0 1 13.4 16.9 Q13.4 15.9 15.3 13.5Z" fill="#2f7fba"/>
</svg>
<span class="t" style="left:450.58px;top:347px;transform:scaleX(0.9195);">Flat colour</span>
<svg class="ic" style="left:517.8px;top:352.4px" width="11" height="6.5" viewBox="-1 -1 11 6.5"><path d="M0 0 L4.5 4.5 L9 0" fill="none" stroke="#8e8e8e" stroke-width="1.05"/></svg>
<div class="sw" style="left:576px;top:346px;background:#5fad65"></div>
<span class="t" style="left:646.1px;top:347px;font-style:italic;transform:scaleX(0.8947);">No query filter</span>
<span class="t" style="left:785.8px;top:347px;transform:scaleX(0.9342);">size:</span>
<span class="t" style="left:851.0px;top:347px;transform:scaleX(0.9136);">4.0</span>
<div class="trk" style="left:911.5px;top:351.3px;width:66.5px"></div>
<div class="knob" style="left:970px;top:346px"></div>
<svg class="ic" style="left:333px;top:375px" width="19" height="16" viewBox="0 0 19 16">
<path d="M3.6 1.2 H14.2 Q14.9 1.2 15 2 L17.1 13 Q17.3 14.3 16 14.3 H2.2 Q.8 14.3 1 13 L2.9 2 Q3 1.2 3.6 1.2Z" fill="#3a85b9" stroke="#8d9399" stroke-width=".6"/>
<path d="M7.6 1.6 H14.2 Q14.6 1.6 14.7 2.2 L14.9 3.5 L10.5 9.9 L9.1 8.6 L7.4 4.1Z" fill="#5dab84"/>
<path d="M3.7 1.6 H7.3 L6.4 4.3 L9.1 6.2 L8.8 7.9 L5.3 6.2 L2.9 4.6 L3.25 2.2 Q3.35 1.6 3.7 1.6Z" fill="#ffcf00"/>
<path d="M2.9 5.6 L6.2 7.2 L1.5 13.5 Q1.2 13.3 1.3 12.8Z" fill="#e53a36"/>
</svg>
<span class="t" style="left:354.0px;top:375px;transform:scaleX(0.8841);">lake_poly</span>
<svg class="ic" style="left:430px;top:373px" width="18" height="19" viewBox="0 0 18 19">
<path d="M7.4 4.4 L1.7 10.7 L7.7 17 L14.3 10.7 Z" fill="#fff"/>
<path d="M2.8 11 H13.2 L7.7 16.4Z" fill="#2f7fba"/>
<path d="M5.4 2.2 L14.4 10.7 L7.7 17.3 L1.6 10.7 L7.5 4.4" fill="none" stroke="#8a8a8a" stroke-width="1.5" stroke-linejoin="round"/>
<path d="M15.3 13.5 Q17.2 15.9 17.2 16.9 A1.9 1.9 0 0 1 13.4 16.9 Q13.4 15.9 15.3 13.5Z" fill="#2f7fba"/>
</svg>
<span class="t" style="left:450.58px;top:375px;transform:scaleX(0.9195);">Flat colour</span>
<svg class="ic" style="left:517.8px;top:380.4px" width="11" height="6.5" viewBox="-1 -1 11 6.5"><path d="M0 0 L4.5 4.5 L9 0" fill="none" stroke="#8e8e8e" stroke-width="1.05"/></svg>
<div class="sw" style="left:576px;top:374px;background:#0000ff"></div>
<span class="t" style="left:646.1px;top:375px;font-style:italic;transform:scaleX(0.8947);">No query filter</span>
<div class="trk" style="left:911.5px;top:379.3px;width:66.5px;background:#b5b5b5"></div>
<div class="trk" style="left:911.5px;top:379.3px;width:29.5px"></div>
<div class="knob" style="left:933px;top:374px"></div>
<svg class="ic" style="left:333px;top:402px" width="18" height="18" viewBox="0 0 18 18">
<path d="M3.3 2.3 L3.8 1 H14.4 L14.9 2.3Z" fill="#cfcfcf" stroke="#c4c4c4" stroke-width=".7"/>
<path d="M2.2 4.4 L2.7 2.7 H15.6 L16.1 4.4Z" fill="#efefef" stroke="#c8c8c8" stroke-width=".7"/>
<rect x="1.75" y="4.85" width="14.7" height="11.4" rx=".7" fill="#a6e1f5" stroke="#a3a3a3" stroke-width="1.1"/>
<path d="M2.3 12.8 L6.5 9.8 L12.6 15.7 H2.3Z" fill="#97d3b5" stroke="#a3a3a3" stroke-width=".9" stroke-linejoin="round"/>
<path d="M11.3 14.2 L14.5 11.5 L15.9 12.8 V15.7 H12.9Z" fill="#97d3b5" stroke="#a3a3a3" stroke-width=".9" stroke-linejoin="round"/>
<circle cx="11.9" cy="8.1" r="1.5" fill="#fff" stroke="#b0b0b0" stroke-width=".8"/>
</svg>
<span class="t" style="left:353.13px;top:403px;transform:scaleX(0.8743);">Farmlan…</span>
<div class="trk" style="left:911.5px;top:407.3px;width:66.5px"></div>
<div class="knob" style="left:970px;top:402px"></div>
<svg class="ic" style="left:333px;top:430px" width="18" height="18" viewBox="0 0 18 18">
<path d="M3.3 2.3 L3.8 1 H14.4 L14.9 2.3Z" fill="#cfcfcf" stroke="#c4c4c4" stroke-width=".7"/>
<path d="M2.2 4.4 L2.7 2.7 H15.6 L16.1 4.4Z" fill="#efefef" stroke="#c8c8c8" stroke-width=".7"/>
<rect x="1.75" y="4.85" width="14.7" height="11.4" rx=".7" fill="#a6e1f5" stroke="#a3a3a3" stroke-width="1.1"/>
<path d="M2.3 12.8 L6.5 9.8 L12.6 15.7 H2.3Z" fill="#97d3b5" stroke="#a3a3a3" stroke-width=".9" stroke-linejoin="round"/>
<path d="M11.3 14.2 L14.5 11.5 L15.9 12.8 V15.7 H12.9Z" fill="#97d3b5" stroke="#a3a3a3" stroke-width=".9" stroke-linejoin="round"/>
<circle cx="11.9" cy="8.1" r="1.5" fill="#fff" stroke="#b0b0b0" stroke-width=".8"/>
</svg>
<span class="t" style="left:354.0px;top:431px;transform:scaleX(0.9015);">Area map</span>
<div class="trk" style="left:911.5px;top:435.3px;width:66.5px"></div>
<div class="knob" style="left:970px;top:430px"></div>
<svg class="ic" style="left:742px;top:347px" width="20" height="16" viewBox="0 0 20 16">
<rect x="1.6" y="2.1" width="6" height="11.5" fill="#fff"/>
<rect x="9.8" y="2.1" width="5.6" height="11.5" fill="#e4e4e4"/>
<path d="M1.5 2.1 H15.4 M1.5 13.6 H15.4" stroke="#c6c6c6" stroke-width="1.2"/>
<ellipse cx="10" cy="7.85" rx="3.2" ry="5.75" fill="#e2e2e2" stroke="#c2c2c2" stroke-width="1.2"/>
<ellipse cx="15.4" cy="7.85" rx="2.9" ry="5.75" fill="#ececec" stroke="#c2c2c2" stroke-width="1.2"/>
</svg>
<div id="popup"><div id="pophl"></div><div id="popfocus"></div></div>
<span class="t" style="left:647.6px;top:149px;font-style:italic;transform:scaleX(0.8976);">No filter selected</span>
<span class="t" style="left:647.32px;top:174px;font-style:italic;color:#036303;transform:scaleX(0.8816);">Topography_contours_values:</span>
<span class="t" style="left:804.7px;top:174px;transform:scaleX(0.9034);">Filter</span>
<svg class="ic" style="left:743px;top:187px" width="15" height="22" viewBox="-1 -1 15 22"><path d="M.5 .5 V16.4 L4.1 12.9 L6.9 19 L9.3 17.9 L6.6 12 H11.6Z" fill="#fff" stroke="#000" stroke-width="1" stroke-linejoin="miter"/></svg>
<svg class="ic" style="left:21px;top:495px" width="26" height="26" viewBox="0 0 26 26"><circle cx="13" cy="13" r="10.6" fill="#f8f8f8" stroke="#2a5d82" stroke-width="1.4"/><path d="M9.9 10.7 Q9.9 8.3 12.8 8.3 Q15.7 8.3 15.7 10.8 Q15.7 12.3 14.2 13.4 Q12.8 14.4 12.8 16" fill="none" stroke="#2a5d82" stroke-width="1.5"/><circle cx="12.8" cy="18.3" r="1" fill="#2a5d82"/></svg>
<div id="revert"></div>
<span class="t" style="left:826.29px;top:501px;color:#2a5f86;transform:scaleX(0.9088);">Re<u>v</u>ert All</span>
<div id="close"></div>
<span class="t" style="left:969.0px;top:501px;color:#fff;transform:scaleX(0.9089);"><u>C</u>lose</span>
</body>
</html>
